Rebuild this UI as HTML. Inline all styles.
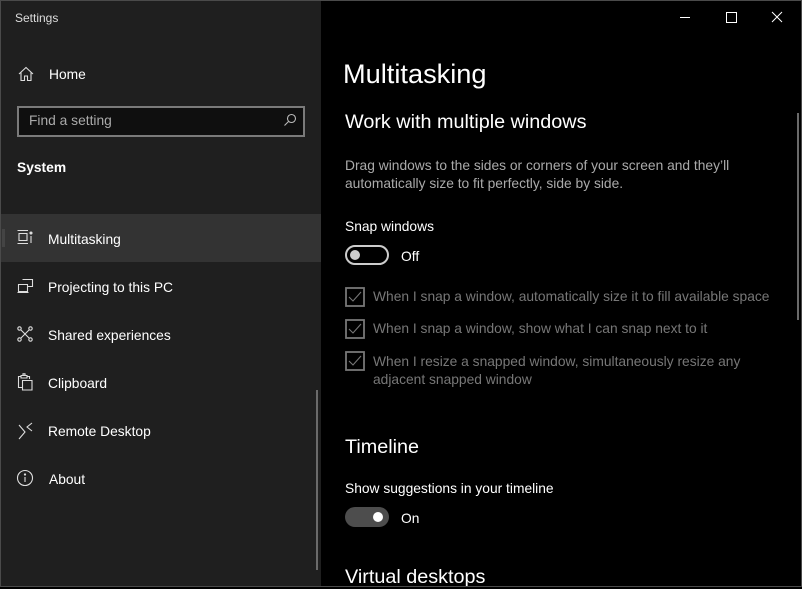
<!DOCTYPE html><html><head><style>
*{margin:0;padding:0;box-sizing:border-box}
body{width:802px;height:587px;overflow:hidden;background:#000;font-family:"Liberation Sans",sans-serif;position:relative}
.win{position:absolute;left:0;top:0;width:802px;height:587px;border:1px solid #4a4a4a}
.side{position:absolute;left:1px;top:1px;width:320px;height:585px;background:#1f1f1f}
.t{position:absolute;white-space:nowrap;color:#fff}
.sel{position:absolute;left:1px;top:214px;width:320px;height:48px;background:#333}
svg{position:absolute}
</style></head><body>
<div class="win"></div>
<div class="side"></div>
<div class="sel"></div>
<div style="position:absolute;left:2px;top:229px;width:3px;height:18px;background:#444"></div>
<div class="t" style="left:15px;top:11px;font-size:12px;color:#ddd">Settings</div>
<svg style="left:18px;top:66px" width="16" height="16" viewBox="0 0 16 16" fill="none" stroke="#ddd" stroke-width="1.1"><path d="M1 8L8 1.5L15 8M3 6.5V14.5H6.5V10H9.5V14.5H13V6.5"/></svg>
<div class="t" style="left:49px;top:67px;font-size:13.8px">Home</div>
<div style="position:absolute;left:17px;top:106px;width:288px;height:31px;border:2px solid #7a7a7a;background:#0f0f0f"></div>
<div class="t" style="left:29px;top:113px;font-size:13.8px;color:#aaa">Find a setting</div>
<svg style="left:283px;top:113px" width="14" height="14" viewBox="0 0 14 14" fill="none" stroke="#bbb" stroke-width="1.1"><circle cx="8.5" cy="5.5" r="4"/><path d="M5.5 8.5L1.5 12.5"/></svg>
<div class="t" style="left:17px;top:160px;font-size:13.8px;font-weight:bold">System</div>
<svg style="left:17px;top:229px" width="16" height="16" viewBox="0 0 16 16" fill="none" stroke="#ddd" stroke-width="1.1"><path d="M0.5 1.5H11M0.5 14.5H11M2 4.5H10V11.5H2Z"/><circle cx="14" cy="4" r="1" fill="#ddd"/><path d="M14 7V14"/></svg>
<div class="t" style="left:48px;top:232px;font-size:13.8px">Multitasking</div>
<svg style="left:17px;top:278px" width="17" height="16" viewBox="0 0 17 16" fill="none" stroke="#ddd" stroke-width="1.1"><path d="M5.5 1.5H15.5V8.5H10M1.5 6.5H10.5V13.5H1.5ZM0.5 14.5H11.5"/></svg>
<div class="t" style="left:48px;top:280px;font-size:13.8px">Projecting to this PC</div>
<svg style="left:17px;top:326px" width="16" height="16" viewBox="0 0 16 16" fill="none" stroke="#ddd" stroke-width="1.1"><circle cx="2.5" cy="2.5" r="1.7"/><circle cx="13.5" cy="2.5" r="1.7"/><circle cx="2.5" cy="13.5" r="1.7"/><circle cx="13.5" cy="13.5" r="1.7"/><path d="M4 4L12 12M12 4L4 12"/></svg>
<div class="t" style="left:48px;top:328px;font-size:13.8px">Shared experiences</div>
<svg style="left:17px;top:373px" width="16" height="18" viewBox="0 0 16 18" fill="none" stroke="#ddd" stroke-width="1.1"><path d="M4 3.5H1.5V14.5H5M10 3.5H12.5V6M4 2.5H10V5H4ZM6 2.5V0.8H8V2.5M5.5 7.5H15V17H5.5Z"/></svg>
<div class="t" style="left:48px;top:376px;font-size:13.8px">Clipboard</div>
<svg style="left:18px;top:422px" width="16" height="18" viewBox="0 0 16 18" fill="none" stroke="#ddd" stroke-width="1.1"><path d="M1 3L7 10L1 17M14 1L9 5L14 9"/></svg>
<div class="t" style="left:48px;top:424px;font-size:13.8px">Remote Desktop</div>
<svg style="left:16px;top:469px" width="18" height="18" viewBox="0 0 18 18" fill="none" stroke="#ddd" stroke-width="1.1"><circle cx="9" cy="9" r="7.5"/><path d="M9 8V13"/><circle cx="9" cy="5.5" r=".6" fill="#ddd"/></svg>
<div class="t" style="left:49px;top:472px;font-size:13.8px">About</div>
<div style="position:absolute;left:316px;top:390px;width:2px;height:180px;background:#6a6a6a"></div>
<div style="position:absolute;left:797px;top:113px;width:2px;height:207px;background:#6a6a6a"></div>
<svg style="left:680px;top:10px" width="110" height="14" viewBox="0 0 110 14" fill="none" stroke="#fff" stroke-width="1"><path d="M0 7.5H10M46.5 2.5H56.5V12.5H46.5ZM92 2L102 12M102 2L92 12"/></svg>
<div class="t" style="left:343px;top:58px;font-size:27.2px;font-weight:300">Multitasking</div>
<div class="t" style="left:345px;top:111px;font-size:19.8px">Work with multiple windows</div>
<div class="t" style="left:345px;top:157px;font-size:13.8px;color:#aaa;line-height:18px">Drag windows to the sides or corners of your screen and they’ll<br>automatically size to fit perfectly, side by side.</div>
<div class="t" style="left:345px;top:219px;font-size:13.8px">Snap windows</div>
<div style="position:absolute;left:345px;top:245px;width:44px;height:20px;border:2px solid #ccc;border-radius:10px"></div>
<div style="position:absolute;left:350px;top:250px;width:10px;height:10px;border-radius:50%;background:#ccc"></div>
<div class="t" style="left:401px;top:249px;font-size:13.8px">Off</div>
<div class="t" style="left:373px;top:289px;font-size:13.8px;color:#777">When I snap a window, automatically size it to fill available space</div>
<div class="t" style="left:373px;top:321px;font-size:13.8px;color:#777">When I snap a window, show what I can snap next to it</div>
<div class="t" style="left:373px;top:353px;font-size:13.8px;color:#777;line-height:18px">When I resize a snapped window, simultaneously resize any<br>adjacent snapped window</div>
<svg style="left:345px;top:287px" width="20" height="86" viewBox="0 0 20 86" fill="none" stroke="#777" stroke-width="1.8"><rect x="1" y="1" width="18" height="18"/><rect x="1" y="33" width="18" height="18"/><rect x="1" y="65" width="18" height="18"/><path d="M4 10L8 14L16 5M4 42L8 46L16 37M4 74L8 78L16 69" stroke-width="1.1"/></svg>
<div class="t" style="left:345px;top:436px;font-size:19.8px">Timeline</div>
<div class="t" style="left:345px;top:481px;font-size:13.8px">Show suggestions in your timeline</div>
<div style="position:absolute;left:345px;top:507px;width:44px;height:20px;border-radius:10px;background:#4d4d4d"></div>
<div style="position:absolute;left:373px;top:512px;width:10px;height:10px;border-radius:50%;background:#fff"></div>
<div class="t" style="left:401px;top:511px;font-size:13.8px">On</div>
<div class="t" style="left:345px;top:566px;font-size:19.8px">Virtual desktops</div>
<div style="position:absolute;left:0;top:586px;width:802px;height:1px;background:#4a4a4a"></div>
<div style="position:absolute;left:801px;top:0;width:1px;height:587px;background:#4a4a4a"></div>
</body></html>
